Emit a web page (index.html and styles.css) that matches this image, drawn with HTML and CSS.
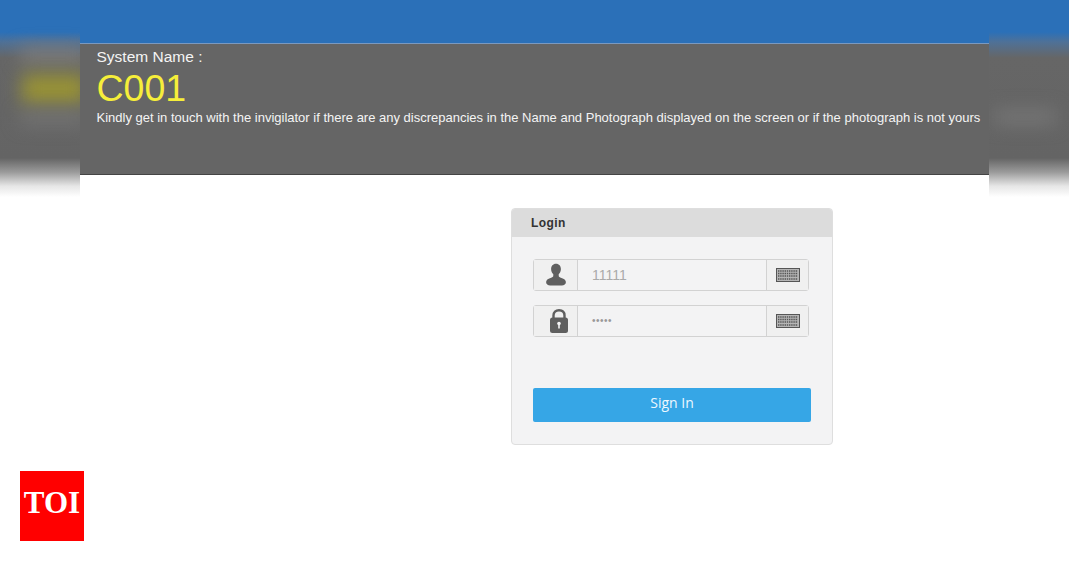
FILE: index.html
```html
<!DOCTYPE html>
<html lang="en">
<head>
    <meta charset="UTF-8">
    <meta name="viewport" content="width=device-width, initial-scale=1.0">
    <title>Login</title>
    <link rel="stylesheet" href="styles.css">
</head>
<body>

    <!-- blurred copy of the header behind the page -->
    <div class="backdrop">
        <span class="smear smear-name"></span>
        <span class="smear smear-code"></span>
        <span class="smear smear-note"></span>
        <span class="smear smear-right"></span>
    </div>

    <div class="page">
        <div class="top-strip"></div>

        <div class="system-bar">
            <div class="system-label">System Name :</div>
            <div class="system-code">C001</div>
            <div class="system-note">Kindly get in touch with the invigilator if there are any discrepancies in the Name and Photograph displayed on the screen or if the photograph is not yours</div>
        </div>

        <div class="main">
            <div class="login-card">
                <div class="login-title">Login</div>
                <div class="login-body">
                    <div class="field">
                        <div class="field-icon">
                            <svg width="20" height="24" viewBox="0 0 22 25">
                                <path fill="#5f5f5f" d="M11 0c3.400 0 5.400 2.500 5.400 5.800 0 2.400-1 4.500-2.400 5.700v2.200c0 .9 1 1.400 3 2 3 .9 4.700 2.200 4.900 4.600.1 2.700-2 3.700-4.500 3.700H4.600c-2.500 0-4.600-1-4.500-3.700.2-2.400 1.900-3.700 4.900-4.600 2-.6 3-1.100 3-2v-2.200C6.600 10.300 5.600 8.200 5.600 5.800 5.600 2.500 7.600 0 11 0z"/>
                            </svg>
                        </div>
                        <div class="field-value">11111</div>
                        <div class="field-keys">
                            <svg width="24" height="14" viewBox="0 0 24 14">
                                <rect x="0.500" y="0.500" width="23" height="13" fill="#b5b5b5" stroke="#555"/>
                                <path stroke="#555" stroke-width="1.500" stroke-dasharray="1.400 .8" fill="none" d="M2 3h20M2 5.500h20M2 8h20M2 11h20"/>
                            </svg>
                        </div>
                    </div>
                    <div class="field">
                        <div class="field-icon">
                            <svg class="lock-icon" width="18" height="24" viewBox="0 0 18 24">
                                <path fill="none" stroke="#5f5f5f" stroke-width="2.400" d="M3.500 10V6.500C3.500 3.200 5.700 1.200 9 1.200s5.500 2 5.500 5.300V10"/>
                                <rect x="0" y="8.500" width="18" height="15.500" rx="2.500" fill="#5f5f5f"/>
                                <circle cx="9" cy="14.500" r="1.800" fill="#f3f3f4"/>
                                <rect x="8.200" y="15" width="1.600" height="4.500" fill="#f3f3f4"/>
                            </svg>
                        </div>
                        <div class="field-value field-dots">•••••</div>
                        <div class="field-keys">
                            <svg width="24" height="14" viewBox="0 0 24 14">
                                <rect x="0.500" y="0.500" width="23" height="13" fill="#b5b5b5" stroke="#555"/>
                                <path stroke="#555" stroke-width="1.500" stroke-dasharray="1.400 .8" fill="none" d="M2 3h20M2 5.500h20M2 8h20M2 11h20"/>
                            </svg>
                        </div>
                    </div>
                    <button class="sign-in">Sign In</button>
                </div>
            </div>
        </div>
    </div>

    <div class="toi-badge">TOI</div>

</body>
</html>
```

FILE: styles.css
```css
body {
    margin: 0;
    height: 580px;
    overflow: hidden;
    position: relative;
    background: #fff;
    font-family: "Liberation Sans", Arial, sans-serif;
}

.backdrop {
    position: absolute;
    top: 0;
    left: 0;
    width: 100%;
    height: 200px;
    overflow: hidden;
    background: linear-gradient(to bottom, #2b70b8 0, #2b70b8 32px, #4f7197 42px, #666 58px, #646464 158px, #9a9a9a 172px, #e6e6e6 186px, #fff 197px);
}

.smear {
    position: absolute;
    filter: blur(9px);
}

.smear-name {
    left: 20px;
    top: 48px;
    width: 66px;
    height: 14px;
    background: #7f7f7f;
}

.smear-code {
    left: 22px;
    top: 74px;
    width: 64px;
    height: 30px;
    background: #989236;
}

.smear-note {
    left: 20px;
    top: 112px;
    width: 66px;
    height: 12px;
    background: #767676;
}

.smear-right {
    left: 994px;
    top: 110px;
    width: 62px;
    height: 14px;
    background: #777;
}

.page {
    position: relative;
    width: 909px;
    margin-left: 80px;
    height: 580px;
    background: #fff;
}

.top-strip {
    height: 43px;
    background: #2b70b8;
}

.system-bar {
    height: 130px;
    padding-left: 16.500px;
    background: #656565;
    border-top: 1px solid #7b99bf;
    border-bottom: 1px solid #444;
    color: #f4f4f4;
}

.system-label {
    font-size: 15.500px;
    line-height: 18px;
    padding-top: 4px;
}

.system-code {
    font-size: 37.500px;
    line-height: 44px;
    color: #f6ee3a;
}

.system-note {
    font-size: 13px;
    line-height: 16px;
    white-space: nowrap;
}

.main {
    padding: 33px 0 0 431px;
}

.login-card {
    width: 320px;
    border: 1px solid #dedede;
    border-radius: 4px;
    background: #f3f3f4;
    overflow: hidden;
}

.login-title {
    height: 28px;
    line-height: 28px;
    padding-left: 19px;
    background: #dcdcdc;
    font-size: 12px;
    font-weight: bold;
    letter-spacing: 0.400px;
    color: #333;
}

.login-body {
    padding: 22px 21px 22px;
}

.field {
    display: flex;
    width: 274px;
    height: 30px;
    margin-bottom: 14px;
    border: 1px solid #d2d2d2;
    border-radius: 3px;
}

.field-icon {
    width: 43px;
    display: flex;
    align-items: center;
    justify-content: center;
    border-right: 1px solid #d2d2d2;
    background: #f0f0f0;
}

.lock-icon {
    margin-left: 6px;
}

.field-value {
    flex: 1;
    padding-left: 14px;
    line-height: 30px;
    font-size: 14px;
    color: #aaa;
}

.field-dots {
    font-size: 10px;
    letter-spacing: 0.500px;
    color: #999;
}

.field-keys {
    width: 41px;
    display: flex;
    align-items: center;
    justify-content: center;
    border-left: 1px solid #d2d2d2;
    background: #f0f0f0;
}

.sign-in {
    display: block;
    width: 278px;
    height: 34px;
    margin-top: 51px;
    padding: 0 0 5px;
    border: none;
    border-radius: 2px;
    background: #36a6e6;
    color: #eef8ff;
    font-family: "Open Sans", Arial, sans-serif;
    font-size: 14px;
    cursor: pointer;
}

.toi-badge {
    position: absolute;
    left: 20px;
    top: 471px;
    width: 64px;
    height: 70px;
    background: #f00;
    color: #fff;
    font-family: "Liberation Serif", "Times New Roman", serif;
    font-size: 31px;
    font-weight: bold;
    line-height: 64px;
    text-align: center;
}
```
